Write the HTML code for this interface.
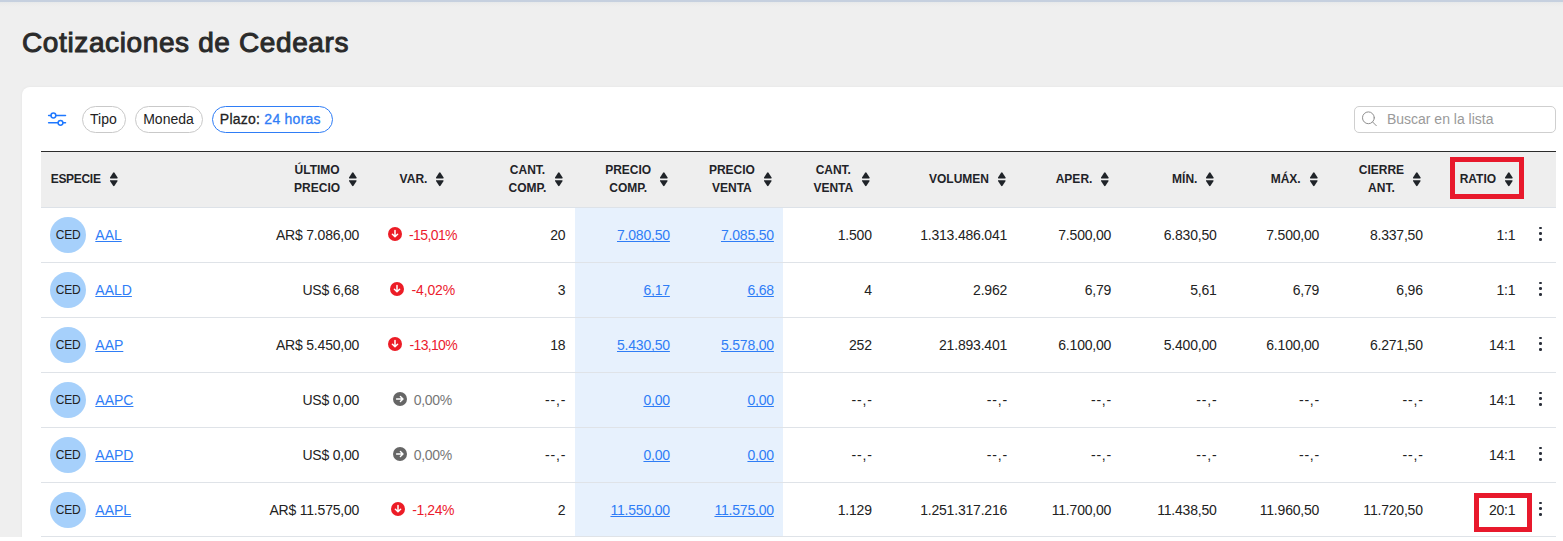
<!DOCTYPE html>
<html><head><meta charset="utf-8"><title>Cotizaciones de Cedears</title>
<style>
*{margin:0;padding:0;box-sizing:border-box}
html,body{width:1563px;height:541px;overflow:hidden}
body{background:#efefef;font-family:"Liberation Sans",sans-serif;color:#222;position:relative}
.a{position:absolute;white-space:nowrap}
.topbar{position:absolute;left:0;top:0;width:1563px;height:2px;background:#c6d0df}
.topshadow{position:absolute;left:0;top:2px;width:1563px;height:5px;background:linear-gradient(#e6e9ea,#ececec 40%,#efefef)}
.title{font-size:28px;letter-spacing:0.62px;-webkit-text-stroke:1px #2a2a2a;color:#2a2a2a;left:22px}
.card{position:absolute;left:22px;top:87px;width:1600px;height:460px;background:#fff;border-radius:8px;box-shadow:0 0 3px rgba(0,0,0,0.05)}
.bottomstrip{position:absolute;left:0;top:537px;width:1563px;height:4px;background:#fff}
.chip{position:absolute;top:106px;height:27px;border:1px solid #c9c9c9;border-radius:14px;background:#fff}
.chipt{font-size:14px;line-height:16px;color:#222}
.search{position:absolute;left:1354px;top:106px;width:202px;height:27px;border:1px solid #cfcfcf;border-radius:5px;background:#fff}
.ph{font-size:14px;line-height:16px;color:#9a9a9a}
.thead{position:absolute;left:41px;top:151px;width:1515px;height:57px;background:#eeeeee;border-top:1px solid #2b2b2b;border-bottom:1px solid #dde2e8}
.hl{font-size:12px;font-weight:bold;line-height:17.5px;text-align:center;color:#1f2328}
.sort{position:absolute;width:8px;height:15px}
.rowline{position:absolute;left:41px;width:1515px;height:1px;background:#dfe3e8}
.bluecol{position:absolute;left:575px;top:208px;width:208px;height:333px;background:#e7f1fd}
.circ{position:absolute;left:50px;width:36px;height:36px;border-radius:50%;background:#a6d0fb}
.ced{font-size:12px;line-height:14px;color:#222;text-align:center;width:36px;left:50px;letter-spacing:-0.25px;text-indent:0.25px}
.d.lnk,.lnk{color:#2f7df6;text-decoration:underline;text-underline-offset:1px;text-decoration-thickness:1px}
.d{font-size:14px;line-height:16px;color:#222;text-align:right;width:200px;letter-spacing:-0.2px}
.var{font-size:14px;line-height:16px;display:flex;align-items:center;justify-content:center;width:160px;left:342.3px;letter-spacing:-0.2px}
.d.red{color:#ec1b2e}
.d.gray{color:#777}
.vi{width:14px;height:14px;flex:none}
.dots{position:absolute;left:1539px;width:3px}
.dots i{display:block;width:2.6px;height:2.6px;border-radius:50%;background:#2a2f3a;margin-bottom:3.15px}
.rbox{position:absolute;border:5px solid #e8192c}
</style></head><body>
<div class="topbar"></div><div class="topshadow"></div>

<div class="a title" style="top:26.60px;line-height:32px">Cotizaciones de Cedears</div>
<div class="card"></div>
<svg class="a" style="left:44px;top:108px" width="28" height="22" viewBox="44 108 28 22">
<g stroke="#1f78ff" stroke-width="1.5" fill="none" stroke-linecap="round">
<line x1="48.6" y1="115.5" x2="51" y2="115.5"/><line x1="55.8" y1="115.5" x2="65.5" y2="115.5"/>
<circle cx="53.4" cy="115.5" r="2.4"/>
<line x1="48.6" y1="122.8" x2="58.1" y2="122.8"/><line x1="62.9" y1="122.8" x2="65.5" y2="122.8"/>
<circle cx="60.5" cy="122.8" r="2.4"/>
</g></svg>
<div class="chip" style="left:82px;width:44px"></div>
<div class="a chipt" style="left:90px;top:111.15px">Tipo</div>
<div class="chip" style="left:135px;width:68px"></div>
<div class="a chipt" style="left:143.2px;top:111.15px">Moneda</div>
<div class="chip" style="left:212px;width:121px;border-color:#2f7df6"></div>
<div class="a chipt" style="left:219.8px;top:111.15px;-webkit-text-stroke:0.3px #222;letter-spacing:0.25px">Plazo: <span style="color:#2f7df6;-webkit-text-stroke-color:#2f7df6">24 horas</span></div>
<div class="search"></div>
<svg class="a" style="left:1355px;top:105px" width="30" height="30" viewBox="1355 105 30 30">
<g stroke="#8f8f8f" stroke-width="1" fill="none" stroke-linecap="round">
<circle cx="1368.4" cy="117.8" r="5.9"/><line x1="1372.7" y1="122.1" x2="1376.3" y2="125.7"/>
</g></svg>
<div class="a ph" style="left:1386.9px;top:110.95px">Buscar en la lista</div>
<div class="thead"></div>
<div class="bluecol"></div>
<div class="a hl" style="left:50.7px;top:170.99px;text-align:left;letter-spacing:-0.3px">ESPECIE</div>
<svg class="sort" style="left:109.70px;top:171.60px" width="8" height="15" viewBox="0 0 8 15"><path d="M3.1 0.7 Q3.8 -0.1 4.5 0.7 L7.6 5.5 Q8 6.4 7 6.4 L0.6 6.4 Q-0.4 6.4 0 5.5 Z" fill="#1f2328"/><path d="M3.1 13.8 Q3.8 14.6 4.5 13.8 L7.6 9.1 Q8 8.2 7 8.2 L0.6 8.2 Q-0.4 8.2 0 9.1 Z" fill="#1f2328"/></svg>
<div class="a hl" style="left:220.10px;width:120px;top:162.19px;text-align:right"><div style="display:inline-block;text-align:center">ÚLTIMO<br>PRECIO</div></div>
<svg class="sort" style="left:349.10px;top:171.60px" width="8" height="15" viewBox="0 0 8 15"><path d="M3.1 0.7 Q3.8 -0.1 4.5 0.7 L7.6 5.5 Q8 6.4 7 6.4 L0.6 6.4 Q-0.4 6.4 0 5.5 Z" fill="#1f2328"/><path d="M3.1 13.8 Q3.8 14.6 4.5 13.8 L7.6 9.1 Q8 8.2 7 8.2 L0.6 8.2 Q-0.4 8.2 0 9.1 Z" fill="#1f2328"/></svg>
<div class="a hl" style="left:307.40px;width:120px;top:170.99px;text-align:right"><div style="display:inline-block;text-align:center">VAR.</div></div>
<svg class="sort" style="left:436.40px;top:171.60px" width="8" height="15" viewBox="0 0 8 15"><path d="M3.1 0.7 Q3.8 -0.1 4.5 0.7 L7.6 5.5 Q8 6.4 7 6.4 L0.6 6.4 Q-0.4 6.4 0 5.5 Z" fill="#1f2328"/><path d="M3.1 13.8 Q3.8 14.6 4.5 13.8 L7.6 9.1 Q8 8.2 7 8.2 L0.6 8.2 Q-0.4 8.2 0 9.1 Z" fill="#1f2328"/></svg>
<div class="a hl" style="left:426.40px;width:120px;top:162.19px;text-align:right"><div style="display:inline-block;text-align:center">CANT.<br>COMP.</div></div>
<svg class="sort" style="left:555.40px;top:171.60px" width="8" height="15" viewBox="0 0 8 15"><path d="M3.1 0.7 Q3.8 -0.1 4.5 0.7 L7.6 5.5 Q8 6.4 7 6.4 L0.6 6.4 Q-0.4 6.4 0 5.5 Z" fill="#1f2328"/><path d="M3.1 13.8 Q3.8 14.6 4.5 13.8 L7.6 9.1 Q8 8.2 7 8.2 L0.6 8.2 Q-0.4 8.2 0 9.1 Z" fill="#1f2328"/></svg>
<div class="a hl" style="left:531.20px;width:120px;top:162.19px;text-align:right"><div style="display:inline-block;text-align:center">PRECIO<br>COMP.</div></div>
<svg class="sort" style="left:660.20px;top:171.60px" width="8" height="15" viewBox="0 0 8 15"><path d="M3.1 0.7 Q3.8 -0.1 4.5 0.7 L7.6 5.5 Q8 6.4 7 6.4 L0.6 6.4 Q-0.4 6.4 0 5.5 Z" fill="#1f2328"/><path d="M3.1 13.8 Q3.8 14.6 4.5 13.8 L7.6 9.1 Q8 8.2 7 8.2 L0.6 8.2 Q-0.4 8.2 0 9.1 Z" fill="#1f2328"/></svg>
<div class="a hl" style="left:634.90px;width:120px;top:162.19px;text-align:right"><div style="display:inline-block;text-align:center">PRECIO<br>VENTA</div></div>
<svg class="sort" style="left:763.90px;top:171.60px" width="8" height="15" viewBox="0 0 8 15"><path d="M3.1 0.7 Q3.8 -0.1 4.5 0.7 L7.6 5.5 Q8 6.4 7 6.4 L0.6 6.4 Q-0.4 6.4 0 5.5 Z" fill="#1f2328"/><path d="M3.1 13.8 Q3.8 14.6 4.5 13.8 L7.6 9.1 Q8 8.2 7 8.2 L0.6 8.2 Q-0.4 8.2 0 9.1 Z" fill="#1f2328"/></svg>
<div class="a hl" style="left:733.20px;width:120px;top:162.19px;text-align:right"><div style="display:inline-block;text-align:center">CANT.<br>VENTA</div></div>
<svg class="sort" style="left:862.20px;top:171.60px" width="8" height="15" viewBox="0 0 8 15"><path d="M3.1 0.7 Q3.8 -0.1 4.5 0.7 L7.6 5.5 Q8 6.4 7 6.4 L0.6 6.4 Q-0.4 6.4 0 5.5 Z" fill="#1f2328"/><path d="M3.1 13.8 Q3.8 14.6 4.5 13.8 L7.6 9.1 Q8 8.2 7 8.2 L0.6 8.2 Q-0.4 8.2 0 9.1 Z" fill="#1f2328"/></svg>
<div class="a hl" style="left:869.00px;width:120px;top:170.99px;text-align:right"><div style="display:inline-block;text-align:center">VOLUMEN</div></div>
<svg class="sort" style="left:998.00px;top:171.60px" width="8" height="15" viewBox="0 0 8 15"><path d="M3.1 0.7 Q3.8 -0.1 4.5 0.7 L7.6 5.5 Q8 6.4 7 6.4 L0.6 6.4 Q-0.4 6.4 0 5.5 Z" fill="#1f2328"/><path d="M3.1 13.8 Q3.8 14.6 4.5 13.8 L7.6 9.1 Q8 8.2 7 8.2 L0.6 8.2 Q-0.4 8.2 0 9.1 Z" fill="#1f2328"/></svg>
<div class="a hl" style="left:972.40px;width:120px;top:170.99px;text-align:right"><div style="display:inline-block;text-align:center">APER.</div></div>
<svg class="sort" style="left:1101.40px;top:171.60px" width="8" height="15" viewBox="0 0 8 15"><path d="M3.1 0.7 Q3.8 -0.1 4.5 0.7 L7.6 5.5 Q8 6.4 7 6.4 L0.6 6.4 Q-0.4 6.4 0 5.5 Z" fill="#1f2328"/><path d="M3.1 13.8 Q3.8 14.6 4.5 13.8 L7.6 9.1 Q8 8.2 7 8.2 L0.6 8.2 Q-0.4 8.2 0 9.1 Z" fill="#1f2328"/></svg>
<div class="a hl" style="left:1077.40px;width:120px;top:170.99px;text-align:right"><div style="display:inline-block;text-align:center">MÍN.</div></div>
<svg class="sort" style="left:1206.40px;top:171.60px" width="8" height="15" viewBox="0 0 8 15"><path d="M3.1 0.7 Q3.8 -0.1 4.5 0.7 L7.6 5.5 Q8 6.4 7 6.4 L0.6 6.4 Q-0.4 6.4 0 5.5 Z" fill="#1f2328"/><path d="M3.1 13.8 Q3.8 14.6 4.5 13.8 L7.6 9.1 Q8 8.2 7 8.2 L0.6 8.2 Q-0.4 8.2 0 9.1 Z" fill="#1f2328"/></svg>
<div class="a hl" style="left:1180.70px;width:120px;top:170.99px;text-align:right"><div style="display:inline-block;text-align:center">MÁX.</div></div>
<svg class="sort" style="left:1309.70px;top:171.60px" width="8" height="15" viewBox="0 0 8 15"><path d="M3.1 0.7 Q3.8 -0.1 4.5 0.7 L7.6 5.5 Q8 6.4 7 6.4 L0.6 6.4 Q-0.4 6.4 0 5.5 Z" fill="#1f2328"/><path d="M3.1 13.8 Q3.8 14.6 4.5 13.8 L7.6 9.1 Q8 8.2 7 8.2 L0.6 8.2 Q-0.4 8.2 0 9.1 Z" fill="#1f2328"/></svg>
<div class="a hl" style="left:1284.10px;width:120px;top:162.19px;text-align:right"><div style="display:inline-block;text-align:center">CIERRE<br>ANT.</div></div>
<svg class="sort" style="left:1413.10px;top:171.60px" width="8" height="15" viewBox="0 0 8 15"><path d="M3.1 0.7 Q3.8 -0.1 4.5 0.7 L7.6 5.5 Q8 6.4 7 6.4 L0.6 6.4 Q-0.4 6.4 0 5.5 Z" fill="#1f2328"/><path d="M3.1 13.8 Q3.8 14.6 4.5 13.8 L7.6 9.1 Q8 8.2 7 8.2 L0.6 8.2 Q-0.4 8.2 0 9.1 Z" fill="#1f2328"/></svg>
<div class="a hl" style="left:1376.10px;width:120px;top:170.99px;text-align:right"><div style="display:inline-block;text-align:center">RATIO</div></div>
<svg class="sort" style="left:1505.10px;top:171.60px" width="8" height="15" viewBox="0 0 8 15"><path d="M3.1 0.7 Q3.8 -0.1 4.5 0.7 L7.6 5.5 Q8 6.4 7 6.4 L0.6 6.4 Q-0.4 6.4 0 5.5 Z" fill="#1f2328"/><path d="M3.1 13.8 Q3.8 14.6 4.5 13.8 L7.6 9.1 Q8 8.2 7 8.2 L0.6 8.2 Q-0.4 8.2 0 9.1 Z" fill="#1f2328"/></svg>
<div class="rowline" style="top:262px"></div>
<div class="circ" style="top:216.80px"></div>
<div class="a ced" style="top:227.54px">CED</div>
<div class="a d lnk" style="left:95.3px;width:auto;text-align:left;top:227.15px;letter-spacing:0">AAL</div>
<div class="a d" style="left:159.20px;top:227.35px">AR$ 7.086,00</div>
<div class="a" style="left:387.90px;top:226.85px;width:14px;height:14px;display:flex"><svg class="vi" viewBox="0 0 14 14"><circle cx="7" cy="7" r="7" fill="#ec1c26"/><path d="M7 3.4 V9.6 M4.4 7.2 L7 9.8 L9.6 7.2" stroke="#fff" stroke-width="1.5" fill="none" stroke-linecap="round" stroke-linejoin="round"/></svg></div>
<div class="a d red" style="left:409.00px;width:auto;text-align:left;top:227.35px;letter-spacing:-0.604px">-15,01%</div>
<div class="a d" style="left:365.40px;top:227.35px">20</div>
<div class="a d lnk" style="left:469.90px;top:227.35px">7.080,50</div>
<div class="a d lnk" style="left:573.90px;top:227.35px">7.085,50</div>
<div class="a d" style="left:671.80px;top:227.35px">1.500</div>
<div class="a d" style="left:807.10px;top:227.35px">1.313.486.041</div>
<div class="a d" style="left:911.20px;top:227.35px">7.500,00</div>
<div class="a d" style="left:1016.60px;top:227.35px">6.830,50</div>
<div class="a d" style="left:1119.20px;top:227.35px">7.500,00</div>
<div class="a d" style="left:1222.80px;top:227.35px">8.337,50</div>
<div class="a d" style="left:1315.40px;top:227.35px">1:1</div>
<div class="dots" style="top:226.60px"><i></i><i></i><i></i></div>
<div class="rowline" style="top:317px"></div>
<div class="circ" style="top:271.80px"></div>
<div class="a ced" style="top:282.54px">CED</div>
<div class="a d lnk" style="left:95.3px;width:auto;text-align:left;top:282.15px;letter-spacing:0">AALD</div>
<div class="a d" style="left:159.20px;top:282.35px">US$ 6,68</div>
<div class="a" style="left:390.00px;top:281.85px;width:14px;height:14px;display:flex"><svg class="vi" viewBox="0 0 14 14"><circle cx="7" cy="7" r="7" fill="#ec1c26"/><path d="M7 3.4 V9.6 M4.4 7.2 L7 9.8 L9.6 7.2" stroke="#fff" stroke-width="1.5" fill="none" stroke-linecap="round" stroke-linejoin="round"/></svg></div>
<div class="a d red" style="left:411.60px;width:auto;text-align:left;top:282.35px;letter-spacing:-0.174px">-4,02%</div>
<div class="a d" style="left:365.40px;top:282.35px">3</div>
<div class="a d lnk" style="left:469.90px;top:282.35px">6,17</div>
<div class="a d lnk" style="left:573.90px;top:282.35px">6,68</div>
<div class="a d" style="left:671.80px;top:282.35px">4</div>
<div class="a d" style="left:807.10px;top:282.35px">2.962</div>
<div class="a d" style="left:911.20px;top:282.35px">6,79</div>
<div class="a d" style="left:1016.60px;top:282.35px">5,61</div>
<div class="a d" style="left:1119.20px;top:282.35px">6,79</div>
<div class="a d" style="left:1222.80px;top:282.35px">6,96</div>
<div class="a d" style="left:1315.40px;top:282.35px">1:1</div>
<div class="dots" style="top:281.60px"><i></i><i></i><i></i></div>
<div class="rowline" style="top:372px"></div>
<div class="circ" style="top:326.80px"></div>
<div class="a ced" style="top:337.54px">CED</div>
<div class="a d lnk" style="left:95.3px;width:auto;text-align:left;top:337.15px;letter-spacing:0">AAP</div>
<div class="a d" style="left:159.20px;top:337.35px">AR$ 5.450,00</div>
<div class="a" style="left:388.30px;top:336.85px;width:14px;height:14px;display:flex"><svg class="vi" viewBox="0 0 14 14"><circle cx="7" cy="7" r="7" fill="#ec1c26"/><path d="M7 3.4 V9.6 M4.4 7.2 L7 9.8 L9.6 7.2" stroke="#fff" stroke-width="1.5" fill="none" stroke-linecap="round" stroke-linejoin="round"/></svg></div>
<div class="a d red" style="left:409.60px;width:auto;text-align:left;top:337.35px;letter-spacing:-0.689px">-13,10%</div>
<div class="a d" style="left:365.40px;top:337.35px">18</div>
<div class="a d lnk" style="left:469.90px;top:337.35px">5.430,50</div>
<div class="a d lnk" style="left:573.90px;top:337.35px">5.578,00</div>
<div class="a d" style="left:671.80px;top:337.35px">252</div>
<div class="a d" style="left:807.10px;top:337.35px">21.893.401</div>
<div class="a d" style="left:911.20px;top:337.35px">6.100,00</div>
<div class="a d" style="left:1016.60px;top:337.35px">5.400,00</div>
<div class="a d" style="left:1119.20px;top:337.35px">6.100,00</div>
<div class="a d" style="left:1222.80px;top:337.35px">6.271,50</div>
<div class="a d" style="left:1315.40px;top:337.35px">14:1</div>
<div class="dots" style="top:336.60px"><i></i><i></i><i></i></div>
<div class="rowline" style="top:427px"></div>
<div class="circ" style="top:381.80px"></div>
<div class="a ced" style="top:392.54px">CED</div>
<div class="a d lnk" style="left:95.3px;width:auto;text-align:left;top:392.15px;letter-spacing:0">AAPC</div>
<div class="a d" style="left:159.20px;top:392.35px">US$ 0,00</div>
<div class="a" style="left:392.90px;top:391.85px;width:14px;height:14px;display:flex"><svg class="vi" viewBox="0 0 14 14"><circle cx="7" cy="7" r="7" fill="#666"/><path d="M3.6 7 H9.8 M7.4 4.4 L10 7 L7.4 9.6" stroke="#fff" stroke-width="1.4" fill="none" stroke-linecap="round" stroke-linejoin="round"/></svg></div>
<div class="a d gray" style="left:413.80px;width:auto;text-align:left;top:392.35px;letter-spacing:-0.318px">0,00%</div>
<div class="a d" style="left:366.20px;top:392.35px;letter-spacing:0.8px">--,-</div>
<div class="a d lnk" style="left:469.90px;top:392.35px">0,00</div>
<div class="a d lnk" style="left:573.90px;top:392.35px">0,00</div>
<div class="a d" style="left:672.60px;top:392.35px;letter-spacing:0.8px">--,-</div>
<div class="a d" style="left:807.90px;top:392.35px;letter-spacing:0.8px">--,-</div>
<div class="a d" style="left:912.00px;top:392.35px;letter-spacing:0.8px">--,-</div>
<div class="a d" style="left:1017.40px;top:392.35px;letter-spacing:0.8px">--,-</div>
<div class="a d" style="left:1120.00px;top:392.35px;letter-spacing:0.8px">--,-</div>
<div class="a d" style="left:1223.60px;top:392.35px;letter-spacing:0.8px">--,-</div>
<div class="a d" style="left:1315.40px;top:392.35px">14:1</div>
<div class="dots" style="top:391.60px"><i></i><i></i><i></i></div>
<div class="rowline" style="top:482px"></div>
<div class="circ" style="top:436.80px"></div>
<div class="a ced" style="top:447.54px">CED</div>
<div class="a d lnk" style="left:95.3px;width:auto;text-align:left;top:447.15px;letter-spacing:0">AAPD</div>
<div class="a d" style="left:159.20px;top:447.35px">US$ 0,00</div>
<div class="a" style="left:392.90px;top:446.85px;width:14px;height:14px;display:flex"><svg class="vi" viewBox="0 0 14 14"><circle cx="7" cy="7" r="7" fill="#666"/><path d="M3.6 7 H9.8 M7.4 4.4 L10 7 L7.4 9.6" stroke="#fff" stroke-width="1.4" fill="none" stroke-linecap="round" stroke-linejoin="round"/></svg></div>
<div class="a d gray" style="left:413.80px;width:auto;text-align:left;top:447.35px;letter-spacing:-0.318px">0,00%</div>
<div class="a d" style="left:366.20px;top:447.35px;letter-spacing:0.8px">--,-</div>
<div class="a d lnk" style="left:469.90px;top:447.35px">0,00</div>
<div class="a d lnk" style="left:573.90px;top:447.35px">0,00</div>
<div class="a d" style="left:672.60px;top:447.35px;letter-spacing:0.8px">--,-</div>
<div class="a d" style="left:807.90px;top:447.35px;letter-spacing:0.8px">--,-</div>
<div class="a d" style="left:912.00px;top:447.35px;letter-spacing:0.8px">--,-</div>
<div class="a d" style="left:1017.40px;top:447.35px;letter-spacing:0.8px">--,-</div>
<div class="a d" style="left:1120.00px;top:447.35px;letter-spacing:0.8px">--,-</div>
<div class="a d" style="left:1223.60px;top:447.35px;letter-spacing:0.8px">--,-</div>
<div class="a d" style="left:1315.40px;top:447.35px">14:1</div>
<div class="dots" style="top:446.60px"><i></i><i></i><i></i></div>
<div class="rowline" style="top:536px"></div>
<div class="circ" style="top:491.80px"></div>
<div class="a ced" style="top:502.54px">CED</div>
<div class="a d lnk" style="left:95.3px;width:auto;text-align:left;top:502.15px;letter-spacing:0">AAPL</div>
<div class="a d" style="left:159.20px;top:502.35px">AR$ 11.575,00</div>
<div class="a" style="left:391.20px;top:501.85px;width:14px;height:14px;display:flex"><svg class="vi" viewBox="0 0 14 14"><circle cx="7" cy="7" r="7" fill="#ec1c26"/><path d="M7 3.4 V9.6 M4.4 7.2 L7 9.8 L9.6 7.2" stroke="#fff" stroke-width="1.5" fill="none" stroke-linecap="round" stroke-linejoin="round"/></svg></div>
<div class="a d red" style="left:412.30px;width:auto;text-align:left;top:502.35px;letter-spacing:-0.441px">-1,24%</div>
<div class="a d" style="left:365.40px;top:502.35px">2</div>
<div class="a d lnk" style="left:469.90px;top:502.35px">11.550,00</div>
<div class="a d lnk" style="left:573.90px;top:502.35px">11.575,00</div>
<div class="a d" style="left:671.80px;top:502.35px">1.129</div>
<div class="a d" style="left:807.10px;top:502.35px">1.251.317.216</div>
<div class="a d" style="left:911.20px;top:502.35px">11.700,00</div>
<div class="a d" style="left:1016.60px;top:502.35px">11.438,50</div>
<div class="a d" style="left:1119.20px;top:502.35px">11.960,50</div>
<div class="a d" style="left:1222.80px;top:502.35px">11.720,50</div>
<div class="a d" style="left:1315.40px;top:502.35px">20:1</div>
<div class="dots" style="top:501.60px"><i></i><i></i><i></i></div>
<div class="rbox" style="left:1450px;top:157px;width:74px;height:42px"></div>
<div class="rbox" style="left:1474px;top:493px;width:58px;height:39px"></div>
<div class="bottomstrip"></div>
</body></html>
